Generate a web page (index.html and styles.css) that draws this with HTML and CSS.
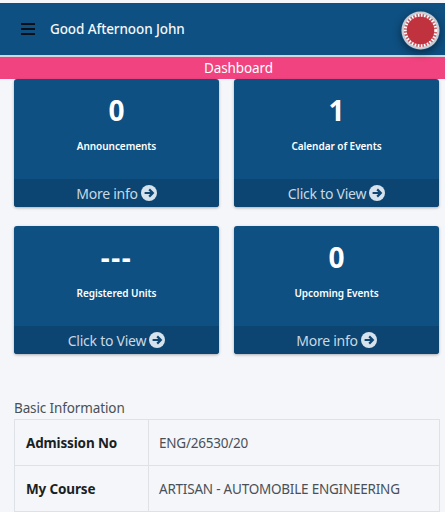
FILE: index.html
```html
<!DOCTYPE html>
<html lang="en">
<head>
  <meta charset="UTF-8">
  <meta name="viewport" content="width=device-width, initial-scale=1.0">
  <title>Dashboard</title>
  <link rel="stylesheet" href="styles.css">
</head>
<body>
  <header class="topbar">
    <div class="burger"><span></span><span></span><span></span></div>
    <h1 class="greeting">Good Afternoon John</h1>
    <div class="avatar">
      <svg viewBox="0 0 40 40" width="39" height="39">
        <circle cx="20" cy="20" r="19.5" fill="#c9ccd3"/>
        <circle cx="20" cy="20" r="17" fill="#c8606a"/>
        <circle cx="20" cy="20" r="15.6" fill="none" stroke="#fff" stroke-width="3.2" stroke-dasharray="1.5 1.7"/>
        <circle cx="20" cy="20" r="14" fill="#c0323d"/>
      </svg>
    </div>
  </header>
  <div class="page-title">Dashboard</div>

  <section class="cards">
    <div class="card">
      <div class="card-body">
        <div class="card-count">0</div>
        <div class="card-label">Announcements</div>
      </div>
      <a class="card-foot" href="#">More info
        <svg class="arrow" viewBox="0 0 16 16"><circle cx="8" cy="8" r="8" fill="#d6e2ec"/><path d="M3.6 8h8M8.2 4.4 11.8 8l-3.6 3.6" fill="none" stroke="#0e4674" stroke-width="2.2"/></svg>
      </a>
    </div>
    <div class="card">
      <div class="card-body">
        <div class="card-count">1</div>
        <div class="card-label">Calendar of Events</div>
      </div>
      <a class="card-foot" href="#">Click to View
        <svg class="arrow" viewBox="0 0 16 16"><circle cx="8" cy="8" r="8" fill="#d6e2ec"/><path d="M3.6 8h8M8.2 4.4 11.8 8l-3.6 3.6" fill="none" stroke="#0e4674" stroke-width="2.2"/></svg>
      </a>
    </div>
    <div class="card">
      <div class="card-body">
        <div class="card-count card-count-empty">---</div>
        <div class="card-label">Registered Units</div>
      </div>
      <a class="card-foot" href="#">Click to View
        <svg class="arrow" viewBox="0 0 16 16"><circle cx="8" cy="8" r="8" fill="#d6e2ec"/><path d="M3.6 8h8M8.2 4.4 11.8 8l-3.6 3.6" fill="none" stroke="#0e4674" stroke-width="2.2"/></svg>
      </a>
    </div>
    <div class="card">
      <div class="card-body">
        <div class="card-count">0</div>
        <div class="card-label">Upcoming Events</div>
      </div>
      <a class="card-foot" href="#">More info
        <svg class="arrow" viewBox="0 0 16 16"><circle cx="8" cy="8" r="8" fill="#d6e2ec"/><path d="M3.6 8h8M8.2 4.4 11.8 8l-3.6 3.6" fill="none" stroke="#0e4674" stroke-width="2.2"/></svg>
      </a>
    </div>
  </section>

  <section class="basic">
    <h2 class="basic-title">Basic Information</h2>
    <table class="info">
      <tr><th>Admission No</th><td>ENG/26530/20</td></tr>
      <tr><th>My Course</th><td>ARTISAN - AUTOMOBILE ENGINEERING</td></tr>
    </table>
  </section>
</body>
</html>
```

FILE: styles.css
```css
/* Global */
html, body { height: 512px; overflow: hidden; }
body {
  margin: 0;
  padding-top: 3px;
  box-sizing: border-box;
  background: #f4f6f9;
  font-family: "Noto Sans", sans-serif;
  color: #212529;
}

/* Top bar */
.topbar {
  display: flex;
  align-items: center;
  height: 52px;
  padding: 0 5px 0 21px;
  background: #0e5082;
}
.burger {
  display: flex;
  flex-direction: column;
  gap: 3px;
  width: 14px;
}
.burger span { height: 2px; background: #0a0f18; }
.greeting {
  flex: 1;
  margin: 0 0 0 15px;
  font-size: 13.5px;
  font-weight: 500;
  letter-spacing: -0.1px;
  color: #f4f7fa;
}
.avatar {
  width: 39px;
  height: 39px;
  margin: 3px 0 0;
  border-radius: 50%;
  box-shadow: 0 3px 8px rgba(0, 0, 0, 0.45);
}
.avatar svg { display: block; }

.page-title {
  height: 22px;
  padding-left: 32px;
  border-top: 2px solid #d3d6dc;
  line-height: 22px;
  background: #f1437f;
  color: #fff;
  font-size: 13.5px;
  letter-spacing: -0.1px;
  text-align: center;
}

/* Cards */
.cards {
  display: grid;
  grid-template-columns: 205px 205px;
  column-gap: 15px;
  row-gap: 19px;
  padding: 0 6px 0 14px;
}
.card {
  display: flex;
  flex-direction: column;
  height: 128px;
  border-radius: 3px;
  background: #0e5082;
  color: #fff;
  box-shadow: 0 1px 3px rgba(0, 0, 0, 0.3);
  overflow: hidden;
}
.card-body { flex: 1; text-align: center; }
.card-count {
  margin-top: 12px;
  font-size: 28px;
  line-height: 38px;
  font-weight: 700;
}
.card-count-empty { letter-spacing: 1.5px; }
.card-label {
  margin-top: 10px;
  font-size: 10px;
  line-height: 14px;
  font-weight: 600;
  letter-spacing: -0.05px;
}
.card-foot {
  display: flex;
  align-items: center;
  justify-content: center;
  gap: 3px;
  height: 28px;
  background: #0c4571;
  color: #c9d8e4;
  font-size: 14px;
  letter-spacing: -0.25px;
  text-decoration: none;
}
.arrow { width: 16px; height: 16px; }

/* Basic information */
.basic { padding: 0 5px 0 14px; margin-top: 46px; }
.basic-title {
  margin: 0;
  height: 19px;
  font-size: 13.5px;
  line-height: 17px;
  font-weight: 400;
  letter-spacing: -0.12px;
  color: #495057;
}
.info {
  width: 100%;
  border-collapse: collapse;
  font-size: 13.5px;
}
.info th, .info td {
  height: 45px;
  padding: 0 10px;
  border: 1px solid #dee2e6;
  text-align: left;
}
.info th { width: 112px; padding-left: 11px; font-weight: 700; letter-spacing: -0.15px; color: #1b1f23; }
.info td { font-weight: 400; letter-spacing: -0.22px; color: #495057; }
```
